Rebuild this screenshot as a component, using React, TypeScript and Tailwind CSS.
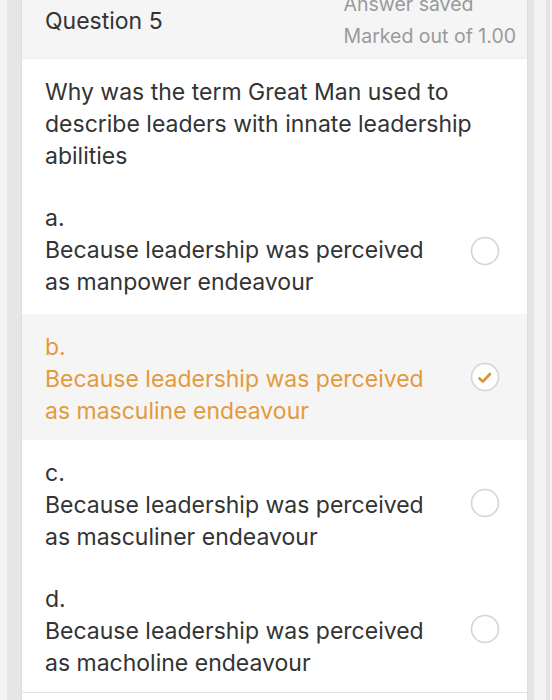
const options = [
  { letter: 'a.', line1: 'Because leadership was perceived', line2: 'as manpower endeavour', selected: false },
  { letter: 'b.', line1: 'Because leadership was perceived', line2: 'as masculine endeavour', selected: true },
  { letter: 'c.', line1: 'Because leadership was perceived', line2: 'as masculiner endeavour', selected: false },
  { letter: 'd.', line1: 'Because leadership was perceived', line2: 'as macholine endeavour', selected: false },
]

function Radio({ checked }: { checked: boolean }) {
  return (
    <svg width="30" height="30" viewBox="0 0 30 30">
      <circle cx="15" cy="15" r="13.5" fill="#fff" stroke="#d4d4d4" strokeWidth="1.6" />
      {checked && (
        <path d="M9.5 16.5 L12.8 19.6 L20 12" fill="none" stroke="#dc9234" strokeWidth="2.6" strokeLinecap="round" strokeLinejoin="round" />
      )}
    </svg>
  )
}

export default function App() {
  return (
    <div
      className="w-[552px] h-[700px] flex overflow-hidden bg-[#f2f2f2] text-[#333]"
      style={{ fontFamily: 'Inter, "Liberation Sans", Arial, sans-serif' }}
    >
      <div className="w-[7px] bg-[#f4f4f4]" />
      <div className="w-[14px] bg-[#e6e6e6]" />
      <div className="w-[507px] flex flex-col bg-white border-x border-[#dedede]">
        <div className="h-[59px] bg-[#f5f5f5] border-b border-[#ececec] flex justify-between pl-[23px] pr-[11px]">
          <div className="text-[23px] leading-[30px] pt-[6px]">Question 5</div>
          <div className="flex flex-col items-start text-[19.5px] text-[#9a9a9a] leading-[28px] -mt-[10px]">
            <span>Answer saved</span>
            <span className="mt-[4px]">Marked out of 1.00</span>
          </div>
        </div>
        <div className="pl-[23px] pt-[17px] pb-[16px] text-[23px] leading-[32px]">
          Why was the term Great Man used to
          <br />
          describe leaders with innate leadership
          <br />
          abilities
        </div>
        {options.map((o, i) => (
          <div
            key={o.letter}
            className={
              'h-[126px] flex items-center pl-[23px] pr-[27px] ' +
              (o.selected ? 'bg-[#f5f5f5] text-[#e39a3c]' : '')
            }
          >
            <div className={'flex-1 text-[23px] leading-[32px] ' + (i === 0 ? 'pb-[2px]' : 'pt-[4px]')}>
              <div>{o.letter}</div>
              <div>{o.line1}</div>
              <div>{o.line2}</div>
            </div>
            <Radio checked={o.selected} />
          </div>
        ))}
        <div className="flex-1 border-t border-[#e4e4e4]" />
      </div>
      <div className="w-[6px] bg-[#e4e4e4]" />
      <div className="w-[12px] bg-[#f3f3f3]" />
      <div className="w-[4px] bg-[#e4e4e4]" />
    </div>
  )
}
